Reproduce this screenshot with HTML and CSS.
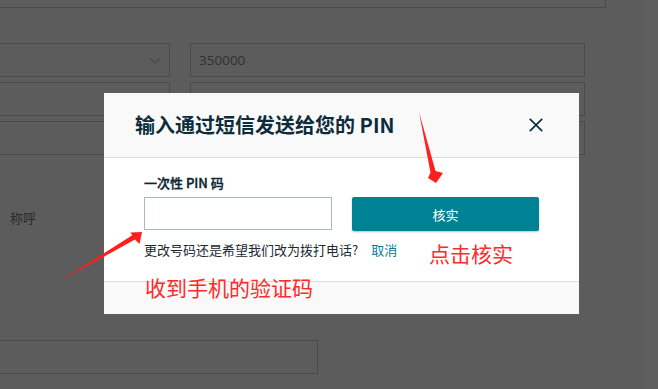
FILE: index.html
```html
<!DOCTYPE html>
<html lang="zh-CN">
<head>
<meta charset="utf-8">
<title>输入 PIN</title>
<link rel="stylesheet" href="styles.css">
</head>
<body>
<div class="page">
  <div class="topbox"></div>
  <div class="fields">
    <div class="field field-select">
      <svg class="chev" width="10" height="6" viewBox="0 0 10 6"><path d="M0.5 0.5 L5 5 L9.5 0.5" fill="none" stroke="#c2c2c2" stroke-width="1.2"/></svg>
    </div>
    <div class="field"><span class="val">350000</span></div>
    <div class="field"></div>
    <div class="field"></div>
    <div class="field"></div>
    <div class="field"></div>
  </div>
  <div class="salutation">称呼</div>
  <div class="field field-wide"></div>
</div>

<div class="backdrop"></div>
<div class="scrolltrack"></div>

<section class="modal">
  <header class="modal-head">
    <h2 class="modal-title">输入通过短信发送给您的 PIN</h2>
    <button class="close" aria-label="关闭">
      <svg width="14" height="14" viewBox="0 0 14 14"><path d="M0.8 0.8 L13.2 13.2 M13.2 0.8 L0.8 13.2" stroke="#0d2c3b" stroke-width="1.7" fill="none"/></svg>
    </button>
  </header>
  <div class="modal-body">
    <label class="pin-label">一次性 PIN 码</label>
    <div class="pin-row">
      <input class="pin-input" type="text">
      <button class="verify">核实</button>
    </div>
    <p class="help">更改号码还是希望我们改为拨打电话?<a class="cancel">取消</a></p>
  </div>
  <footer class="modal-foot"></footer>
</section>

<svg class="annot" width="658" height="389" viewBox="0 0 658 389">
  <path d="M419 112 L435.5 171 L443 173 L436 183 L428 178 L430.5 172.5 Z" fill="#ff1f1f"/>
  <path d="M60 281 L132.3 235.3 L130.5 232.5 L142 232 L139.5 244 L135 239.5 Z" fill="#ff1f1f"/>
</svg>
<div class="note note-code">收到手机的验证码</div>
<div class="note note-click">点击核实</div>
</body>
</html>
```

FILE: styles.css
```css
html, body {
  margin: 0;
  padding: 0;
  background: #ffffff;
  overflow: hidden;
  font-family: "Noto Sans CJK SC", "Open Sans", sans-serif;
}

.page {
  margin-left: -20px;
  width: 625px;
}

.topbox {
  width: 624px;
  height: 7px;
  border: 1px solid #cecece;
  border-top: 0;
}

.fields {
  margin-top: 35px;
  display: grid;
  grid-template-columns: 190px 395px;
  column-gap: 20px;
  row-gap: 5px;
}

.field {
  box-sizing: border-box;
  height: 34px;
  border: 1px solid #cecece;
  display: flex;
  align-items: center;
}

.field-select {
  justify-content: flex-end;
  padding-right: 9px;
}

.chev { display: block; margin-top: 1px; }

.val {
  padding-left: 8px;
  font-family: "Open Sans", sans-serif;
  font-size: 13.5px;
  color: #8a8a8a;
}

.salutation {
  margin-top: 53px;
  padding-left: 30px;
  font-size: 13px;
  line-height: 20px;
  color: #7a7a7a;
}

.field-wide {
  margin-top: 112px;
  width: 338px;
}

.backdrop {
  position: fixed;
  inset: 0;
  background: rgba(0, 0, 0, 0.64);
}

.scrolltrack {
  position: fixed;
  top: 0;
  right: 0;
  width: 13px;
  height: 100%;
  background: #5f5f5f;
}

.modal {
  position: fixed;
  left: 104px;
  top: 93px;
  width: 475px;
  background: #ffffff;
  display: flex;
  flex-direction: column;
}

.modal-head {
  height: 64px;
  background: #f9f9f9;
  border-bottom: 1px solid #dcdcdc;
  display: flex;
  align-items: center;
  justify-content: space-between;
  padding: 0 36px 0 31px;
}

.modal-title {
  margin: 0;
  font-size: 20px;
  font-weight: 700;
  line-height: 24px;
  color: #0d2c3b;
}

.close {
  border: 0;
  background: none;
  padding: 0;
  width: 14px;
  height: 14px;
  display: flex;
}

.modal-body {
  padding: 15px 40px 21px;
  display: flex;
  flex-direction: column;
}

.pin-label {
  font-size: 13px;
  font-weight: 500;
  line-height: 20px;
  color: #0d2430;
  -webkit-text-stroke: 0.35px #0d2430;
}

.pin-row {
  margin-top: 4px;
  display: grid;
  grid-template-columns: 188px 1fr;
  column-gap: 20px;
}

.pin-input {
  box-sizing: border-box;
  height: 33px;
  margin: 0;
  border: 1px solid #a9babf;
  border-radius: 0;
  background: #fff;
}

.verify {
  height: 34px;
  margin: 0;
  border: 0;
  border-radius: 2px;
  background: #008294;
  color: #ffffff;
  font-family: "Noto Sans CJK SC", sans-serif;
  font-size: 13px;
  box-shadow: 0 1px 2px rgba(0, 0, 0, 0.25);
}

.help {
  margin: 9px 0 0;
  font-size: 13px;
  line-height: 20px;
  color: #1b2a33;
}

.cancel {
  margin-left: 13px;
  color: #0f7a99;
}

.modal-foot {
  height: 32px;
  background: #f9f9f9;
  border-top: 1px solid #dcdcdc;
}

.annot {
  position: fixed;
  left: 0;
  top: 0;
  pointer-events: none;
}

.note {
  position: fixed;
  font-size: 21px;
  line-height: 24px;
  color: #ff2a2a;
  white-space: nowrap;
}

.note-code { left: 145px; top: 275px; }
.note-click { left: 429px; top: 241px; }
```
